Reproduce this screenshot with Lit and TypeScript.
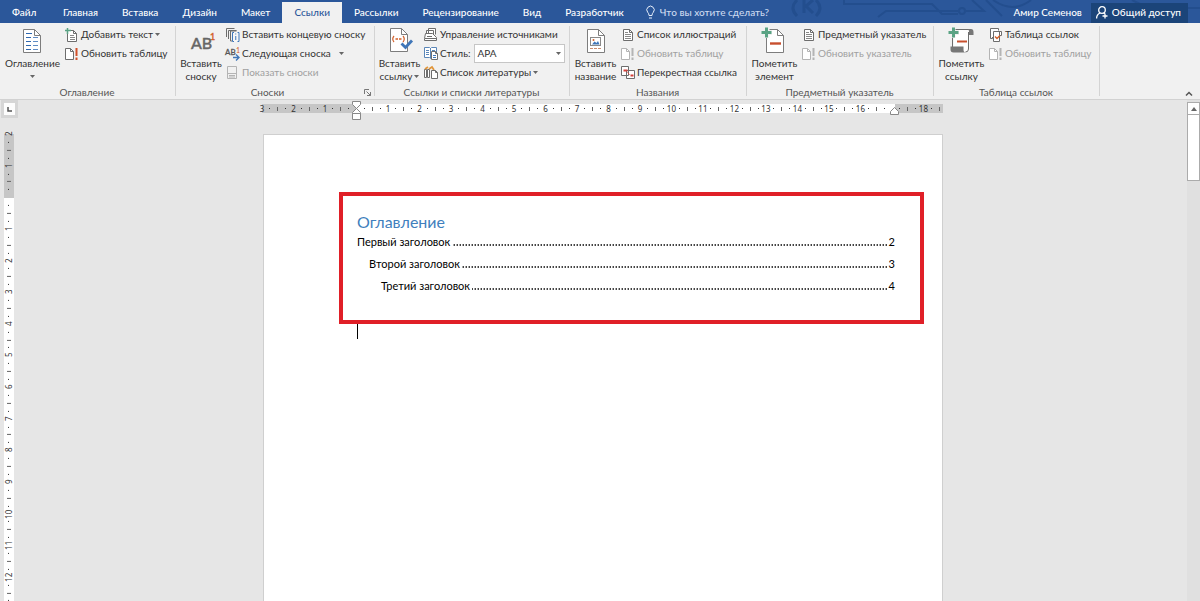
import { LitElement, html, css, svg, nothing } from "lit";
import { customElement } from "lit/decorators.js";

const page = (x: number, y: number, w: number, h: number, f: number, stroke = "#6d6d6d") => svg`
  <path d="M${x + 0.5} ${y + 0.5}h${w - f - 1}l${f} ${f}v${h - f - 1}h${-(w - 1)}z" fill="#fff" stroke=${stroke}/>
  <path d="M${x + w - f - 0.5} ${y + 0.5}v${f}h${f}" fill="none" stroke=${stroke}/>`;

const big: Record<string, unknown> = {
  toc: svg`${page(3, 1, 18, 24, 6, "#7d7d7d")}
    <path d="M6 5.500h6M6 9.500h5M6 13.500h5M6 17.500h5M6 21.500h5" stroke="#2f68b0" fill="none"/>
    <path d="M13 9.500h5M13 13.500h5M13 17.500h5M13 21.500h5" stroke="#5f8cc4" fill="none"/>`,
  footnote: svg`<text x="3" y="21" font-size="16" fill="#666" stroke="#666" stroke-width=".5">AB</text>
    <text x="22" y="12" font-size="9" fill="#d2602a" stroke="#d2602a" stroke-width=".4">1</text>`,
  cite: svg`${page(3, 0, 18, 24, 6, "#7d7d7d")}
    <path d="M7 8q-2.500 3 0 6M16 8q2.500 3 0 6" stroke="#d2602a" fill="none" stroke-width="1.200"/>
    <path d="M8.500 11h2.500M12 11h2.500" stroke="#d2602a" fill="none" stroke-width="1.600"/>
    <path d="M14.500 15.500l4 4 6.500-7" stroke="#3f76b8" fill="none" stroke-width="2.800"/>`,
  caption: svg`${page(4, 1, 18, 24, 6, "#7d7d7d")}
    <rect x="7.500" y="9.500" width="10" height="8" fill="#fff" stroke="#8a8a8a"/>
    <path d="M9 16.500l2.500-3 2 1.500 1.500-2 1.500 3.500z" fill="#3f76b8"/><circle cx="10.500" cy="12" r="1" fill="#d2602a"/>
    <path d="M7 20.500h3M11 20.500h3M15 20.500h3" stroke="#c98b6c"/>`,
  entry: svg`${page(4, 1, 18, 24, 6, "#7d7d7d")}
    <path d="M5-1v11M0 4.500h10" stroke="#f1f1f1" stroke-width="5"/>
    <path d="M4.500-.500v10M-.500 4.500h10" stroke="#5aa384" stroke-width="3"/>
    <path d="M8 15.500h11" stroke="#c8502e" stroke-width="2.400"/>`,
  authority: svg`<path d="M4.500 1.500h16v22h-16z" fill="#fff" stroke="none"/>
    <path d="M6 1.500h15M3.500 8v11M19.500 4v17q0 3-3 3" stroke="#6d6d6d" fill="none"/>
    <path d="M18 1h4q2.500 0 2.500 3v3h-4.500v-3q0-3-2-3z" fill="#777"/>
    <path d="M1.500 18.500h13v3q0 3 2 3h-12q-3 0-3-3z" fill="#777"/>
    <path d="M4-1v11M0 4.500h10" stroke="#f1f1f1" stroke-width="5"/>
    <path d="M4.500-.500v10M-.500 4.500h10" stroke="#5aa384" stroke-width="3"/>
    <path d="M8 13.500h10" stroke="#c8502e" stroke-width="2"/>`,
};

const update = (stroke: string, mark: string) => svg`${page(0, 1, 9, 12, 3, stroke)}
  <path d="M11.500 1v8M11.500 10.500v2.500" stroke=${mark} stroke-width="2"/>`;

const small: Record<string, unknown> = {
  addText: svg`${page(2, 2, 10, 12, 3)}<path d="M2.500 0v6M0 2.500h6" stroke="#5aa384" stroke-width="1.500"/>
    <path d="M5 7.500h4M5 9.500h5M5 11.500h5" stroke="#888"/>`,
  update: update("#6d6d6d", "#d2502a"),
  updateOff: update("#b4b4b4", "#b4b4b4"),
  endnote: svg`<path d="M.500 9v-8.500h8M2.500 11v-8.500h8M10.500 3h-6v10h2" fill="none" stroke="#6d6d6d"/>
    <rect x="6" y="4" width="8" height="10" fill="#f6f6f6"/>
    <path d="M8 4.500h-1.500v9h1.500M11.500 4.500h1.500v9h-1.500M9.750 8v4M9.750 5.500v1" fill="none" stroke="#3f76b8"/>`,
  nextNote: svg`<text x="-1" y="8" font-size="8" fill="#555" stroke="#555" stroke-width=".3">AB</text>
    <text x="10" y="6" font-size="7" fill="#d2602a">1</text>
    <path d="M7 10.500h6M10 7.500l3 3-3 3" fill="none" stroke="#3f76b8" stroke-width="1.400"/>`,
  showNotes: svg`<path d="M1.500 .500h9v12h-9zM1.500 7.500h9" fill="#f1f1f1" stroke="#b4b4b4"/>
    <path d="M3 9.500h6M3 11h6" stroke="#b4b4b4"/>`,
  sources: svg`<path d="M4.500 5v-4.500h7v6M2.500 6v-3.500h7v4" fill="#fff" stroke="#6d6d6d"/>
    <path d="M1.500 5.500h7l4 4v3h-12v-2z" fill="#fff" stroke="#6d6d6d"/>
    <path d="M3 8.500h5M1 10.500h11" stroke="#6d6d6d"/>`,
  style: svg`<path d="M.500 .500h5l1 1 1-1h5v10h-5l-1 1-1-1h-5zM6.500 1v10" fill="#fff" stroke="#5a86b8"/>
    <path d="M2 3.500h3M2 5.500h3M2 7.500h3M8 3.500h3" stroke="#5a86b8"/>${page(7, 4, 7, 9, 2)}
    <path d="M9 8.500h3M9 10.500h3" stroke="#3f76b8"/>`,
  biblio: svg`<path d="M.500 3.500h2v8h-2zM3.500 3.500h2v8h-2z" fill="#fff" stroke="#6d6d6d"/>
    <path d="M1 3l3-2M5 3l3-2 2 3" fill="none" stroke="#e0963c" stroke-width="1.800"/>${page(7, 4, 7, 9, 2)}`,
  figures: svg`${page(2, 1, 10, 12, 3)}<path d="M4 4.500h3M4 6.500h6M4 8.500h6M4 10.500h6" stroke="#888"/>`,
  xref: svg`<path d="M.500 .500h7v9h-7zM5.500 4.500h8v8h-8z" fill="#fff" stroke="#6d6d6d"/>
    <path d="M2.500 4.500h4M9.500 9.500h3" stroke="#d2403a" stroke-width="2"/><path d="M6.500 6.500l2 2" stroke="#d2403a"/>`,
  authTable: svg`<path d="M3.500 9v1.500h-2v-10h8v2" fill="#fff" stroke="#6d6d6d"/>
    <path d="M4.500 3.500h8v4h-2v6h-6zM10.500 3.500v4" fill="#fff" stroke="#6d6d6d"/>
    <path d="M6 8.500l2 2 3-3" fill="none" stroke="#d2602a" stroke-width="1.400"/>`,
};

const bigIcon = (n: string) => html`<svg class="big-ic" viewBox="0 0 26 26" aria-hidden="true">${big[n]}</svg>`;
const smallIcon = (n: string) => html`<svg class="small-ic" viewBox="0 0 14 14" aria-hidden="true">${small[n]}</svg>`;
const arrow = html`<svg class="arrow" viewBox="0 0 5 3" aria-hidden="true"><path d="M0 0h5l-2.500 3z" fill="#666"/></svg>`;

interface Cmd { icon: string; text: string; off?: boolean; menu?: boolean; wide?: boolean; combo?: string }
interface Group { title: string; width: number; bigWidth: number; icon: string; lines: string[]; menu?: boolean; launcher?: boolean; cmds: Cmd[] }

const GROUPS: Group[] = [
  { title: "Оглавление", width: 176, bigWidth: 57, icon: "toc", lines: ["Оглавление", ""], menu: true, cmds: [
    { icon: "addText", text: "Добавить текст", menu: true },
    { icon: "update", text: "Обновить таблицу" }] },
  { title: "Сноски", width: 199, bigWidth: 42, icon: "footnote", lines: ["Вставить", "сноску"], launcher: true, cmds: [
    { icon: "endnote", text: "Вставить концевую сноску" },
    { icon: "nextNote", text: "Следующая сноска", menu: true, wide: true },
    { icon: "showNotes", text: "Показать сноски", off: true }] },
  { title: "Ссылки и списки литературы", width: 195, bigWidth: 41, icon: "cite", lines: ["Вставить", "ссылку"], menu: true, cmds: [
    { icon: "sources", text: "Управление источниками" },
    { icon: "style", text: "Стиль:", combo: "APA" },
    { icon: "biblio", text: "Список литературы", menu: true }] },
  { title: "Названия", width: 177, bigWidth: 43, icon: "caption", lines: ["Вставить", "название"], cmds: [
    { icon: "figures", text: "Список иллюстраций" },
    { icon: "updateOff", text: "Обновить таблицу", off: true },
    { icon: "xref", text: "Перекрестная ссылка" }] },
  { title: "Предметный указатель", width: 187, bigWidth: 47, icon: "entry", lines: ["Пометить", "элемент"], cmds: [
    { icon: "figures", text: "Предметный указатель" },
    { icon: "updateOff", text: "Обновить указатель", off: true }] },
  { title: "Таблица ссылок", width: 166, bigWidth: 47, icon: "authority", lines: ["Пометить", "ссылку"], cmds: [
    { icon: "authTable", text: "Таблица ссылок" },
    { icon: "updateOff", text: "Обновить таблицу", off: true }] },
];

const TABS = ["Главная", "Вставка", "Дизайн", "Макет", "Ссылки", "Рассылки", "Рецензирование", "Вид", "Разработчик"];

const TOC = [
  { text: "Первый заголовок", num: 2, level: 1 },
  { text: "Второй заголовок", num: 3, level: 2 },
  { text: "Третий заголовок", num: 4, level: 3 },
];

// One cell per quarter of a centimetre; the numbers in `hidden` are left blank.
const ticks = (from: number, count: number, hidden: number[]) =>
  Array.from({ length: count }, (_, i) => {
    const q = from + i;
    if (q % 4 === 0) {
      const n = Math.abs(q / 4);
      return html`<span class="tick">${hidden.includes(q / 4) ? nothing : n}</span>`;
    }
    return html`<span class="tick"><i class=${q % 2 === 0 ? "half" : "dot"}></i></span>`;
  });

@customElement("app-root")
export class AppRoot extends LitElement {
  static styles = css`
    :host { display: flex; flex-direction: column; height: 100vh; overflow: hidden; background: #e6e6e6;
      font: 10px/13px Lato, "Open Sans", sans-serif; color: #333; }
    * { box-sizing: border-box; }
    button { font: inherit; color: inherit; background: none; border: 0; padding: 0; margin: 0; text-align: left; white-space: nowrap; }
    svg { overflow: visible; flex: none; }

    .title { position: relative; display: flex; height: 23px; background: #2b579a; color: #fff; font-weight: 500; flex: none; }
    .deco { position: absolute; right: 0; top: 0; width: 420px; height: 23px; overflow: hidden; }
    .tabs { display: flex; padding-top: 2px; }
    .tab { padding: 0 12px; line-height: 21px; }
    .tab.active { background: #f1f1f1; color: #2b579a; }
    .file { width: 51px; }
    .tell { position: relative; display: flex; align-items: center; gap: 5px; padding: 2px 10px 0; color: #cddaf0; }
    .tell svg { width: 9px; height: 13px; }
    .account { position: relative; margin-left: auto; display: flex; align-items: center; gap: 9px; padding: 2px 12px 0 0; }
    .share { display: flex; align-items: center; gap: 4px; height: 20px; padding: 0 7px 0 5px; background: #1b4479; }
    .share svg { width: 12px; height: 13px; }

    .ribbon { position: relative; display: flex; height: 77px; background: #f1f1f1; border-bottom: 1px solid #d2d2d2; flex: none; padding-top: 2px; }
    .group { position: relative; display: flex; flex-direction: column; justify-content: space-between; padding: 0 0 0 4px; flex: none; }
    .group::after { content: ""; position: absolute; right: 0; top: 1px; bottom: 3px; width: 1px; background: #d4d4d4; }
    .body { display: flex; gap: 4px; }
    .big { display: flex; flex-direction: column; align-items: center; padding-top: 3px; height: 60px; flex: none; }
    .big-ic { width: 26px; height: 26px; margin-bottom: 3px; }
    .line { display: flex; align-items: center; gap: 2px; height: 13px; }
    .cmds { display: flex; flex-direction: column; }
    .cmd { display: flex; align-items: center; gap: 2px; height: 19px; }
    .cmd:disabled { color: #a0a0a0; }
    .wide .arrow { margin-left: 6px; }
    .small-ic { width: 14px; height: 14px; }
    .arrow { width: 5px; height: 3px; }
    .combo { display: flex; position: relative; margin-left: 2px; align-items: center; }
    .combo .arrow { position: absolute; right: 4px; }
    select { appearance: none; width: 91px; height: 19px; border: 1px solid #c6c6c6; border-radius: 0; background: #fff; font: inherit; color: inherit; padding: 0 2px; }
    .caption { text-align: center; line-height: 13px; padding: 0 6px 0 0; color: #555; }
    .has-launcher { padding-right: 20px; }
    .launcher { position: absolute; right: 4px; bottom: 3px; width: 7px; height: 7px; display: flex; }
    .collapse { position: absolute; right: 7px; bottom: 3px; display: flex; }

    .work { flex: 1; min-height: 0; display: grid; grid-template-columns: 19px 1fr 13px; }
    .side { display: flex; flex-direction: column; min-height: 0; }
    .corner { margin-left: 1px; width: 17px; height: 18px; border: 3px solid #d6d6d6; background: #fdfdfd; display: flex; align-items: center; justify-content: center; flex: none; }
    .vruler { flex: 1; min-height: 0; display: flex; flex-direction: column; margin: 12px 0 -3px 4px; width: 10px; font: 8px/10px "Noto Sans", sans-serif;
      background: linear-gradient(transparent 4px, #c6c6c6 4px 68px, #fff 68px); }
    .tick { flex: 1 1 0; min-width: 0; min-height: 0; display: flex; align-items: center; justify-content: center; }
    .vruler .tick { writing-mode: vertical-rl; transform: rotate(180deg); }
    .half { width: 1px; height: 4px; background: #666; }
    .dot { width: 1px; height: 1px; background: #333; }
    .vruler .half { width: 4px; height: 1px; }
    .center { display: flex; flex-direction: column; align-items: center; min-height: 0; min-width: 0; }
    .sheet { width: 680px; flex: 1; display: flex; flex-direction: column; min-height: 0; }
    .hruler { position: relative; flex: none; display: flex; height: 9px; margin: 4px 0 0 -5px; font: 8px/9px "Noto Sans", sans-serif;
      background: linear-gradient(90deg, transparent 4px, #c6c6c6 4px 99px, #fff 99px 637px, #c6c6c6 637px); }
    .indent { position: absolute; top: -3px; left: 94px; width: 9px; height: 19px; }
    .indent.end { left: 632px; top: 3px; height: 8px; }
    .paper { flex: 1; margin-top: 21px; background: #fff; border: 1px solid #cfcfcf; border-bottom: 0; padding: 57px 18px 0 75px; }
    .frame { border: 4px solid #e01f27; height: 132px; padding: 16px 25px 0 14px; color: #000; font-size: 11px; }
    h1 { margin: 0; font-weight: 400; font-size: 16px; line-height: 20px; color: #3f7fbd; }
    .entry { display: flex; height: 22px; line-height: 20px; color: inherit; text-decoration: none; }
    .l2 { padding-left: 12px; }
    .l3 { padding-left: 24px; }
    .leader { flex: 1; height: 2px; margin: 12px 2px 0 2px; background: repeating-linear-gradient(270deg, #444 0 1px, #aaa 1px 2px, transparent 2px 3px); }
    .caret { margin-left: 18px; width: 1px; height: 15px; background: #000; }

    .scroll { display: flex; flex-direction: column; padding-top: 2px; background: #e0e0e0; }
    .up { height: 13px; border: 1px solid #ababab; background: #fff; display: flex; align-items: center; justify-content: center; }
    .thumb { height: 66px; border: 1px solid #ababab; background: #fff; border-top: 0; }
  `;

  private command(c: Cmd) {
    if (c.combo)
      return html`<div class="cmd">${smallIcon(c.icon)}<label for="style">${c.text}</label>
        <span class="combo"><select id="style"><option>${c.combo}</option></select>${arrow}</span></div>`;
    return html`<button class="cmd ${c.wide ? "wide" : ""}" ?disabled=${c.off}>${smallIcon(c.icon)}<span>${c.text}</span>${c.menu ? arrow : nothing}</button>`;
  }

  private group(g: Group) {
    return html`<section class="group" style="width:${g.width}px" aria-label=${g.title}>
      <div class="body">
        <button class="big" style="width:${g.bigWidth}px">${bigIcon(g.icon)}
          <span class="line">${g.lines[0]}</span>
          <span class="line">${g.lines[1]}${g.menu ? arrow : nothing}</span>
        </button>
        <div class="cmds">${g.cmds.map((c) => this.command(c))}</div>
      </div>
      <div class="caption ${g.launcher ? "has-launcher" : ""}">${g.title}</div>
      ${g.launcher ? html`<button class="launcher" aria-label="Параметры сносок"><svg width="7" height="7" viewBox="0 0 7 7">
        <path d="M.500 5v-4.500h4.500M2.500 2.500l4 4M6.500 3v3.500h-3.500" fill="none" stroke="#777"/></svg></button>` : nothing}
    </section>`;
  }

  render() {
    return html`
      <header class="title">
        <svg class="deco" viewBox="0 0 420 23" aria-hidden="true" fill="none" stroke="#234e8e" stroke-width="3">
          <path d="M17 0q-8 8 0 16M36 0q8 8 0 16M24 0v13M33 0l-7 6 7 7" />
          <path d="M64 0v4h88l10 10h16M186 11h18l-12-11M98 17l8-6h72M206 0l16 16M213 0q20 14 38 0M352 0l16 8h52" stroke-width="2"/>
          <circle cx="182" cy="11" r="3" stroke-width="2"/>
        </svg>
        <nav class="tabs">
          <button class="tab file">Файл</button>
          ${TABS.map((t) => html`<button class="tab ${t === "Ссылки" ? "active" : ""}">${t}</button>`)}
        </nav>
        <button class="tell"><svg viewBox="0 0 9 13" fill="none" stroke="#e6eefa"><path d="M3 9.500q0-2-1.300-3.200a3.700 3.700 0 1 1 5.600 0q-1.300 1.200-1.300 3.200zM3 12h3"/></svg>Что вы хотите сделать?</button>
        <div class="account"><span>Амир Семенов</span>
          <button class="share"><svg viewBox="0 0 12 13" fill="none" stroke="#fff" stroke-width="1.300"><circle cx="6" cy="4" r="3.300"/><path d="M.600 12.500q0-4 3.500-5.500M7.500 7l1.500 1M9 7.500v5M6.500 10h5"/></svg>Общий доступ</button>
        </div>
      </header>
      <div class="ribbon">
        ${GROUPS.map((g) => this.group(g))}
        <button class="collapse" aria-label="Свернуть ленту"><svg width="8" height="5" viewBox="0 0 8 5"><path d="M1 4.500l3-3 3 3" fill="none" stroke="#555" stroke-width="1.500"/></svg></button>
      </div>
      <main class="work">
        <div class="side">
          <div class="corner"><svg width="5" height="5" viewBox="0 0 5 5"><path d="M1 0v4h4" fill="none" stroke="#555" stroke-width="1.500"/></svg></div>
          <div class="vruler">${ticks(-8, 60, [0])}</div>
        </div>
        <div class="center"><div class="sheet">
          <div class="hruler">${ticks(-12, 87, [0, 17])}
            <svg class="indent" viewBox="0 0 9 19" fill="#fff" stroke="#888"><path d="M.500 .500h8v3l-4 4-4-4zM4.500 7.500l4 4v1h-8v-1zM.500 12.500h8v6h-8z"/></svg>
            <svg class="indent end" viewBox="0 0 9 8" fill="#fff" stroke="#888"><path d="M4.500 .500l4 4v3h-8v-3z"/></svg>
          </div>
          <article class="paper">
            <div class="frame">
              <h1>Оглавление</h1>
              ${TOC.map((e) => html`<a class="entry l${e.level}" href="#h${e.num}"><span>${e.text}</span><span class="leader"></span><span>${e.num}</span></a>`)}
            </div>
            <div class="caret"></div>
          </article>
        </div></div>
        <div class="scroll">
          <button class="up" aria-label="Прокрутить вверх"><svg width="6" height="4" viewBox="0 0 6 4"><path d="M0 4h6l-3-4z" fill="#666"/></svg></button>
          <div class="thumb"></div>
        </div>
      </main>`;
  }
}
